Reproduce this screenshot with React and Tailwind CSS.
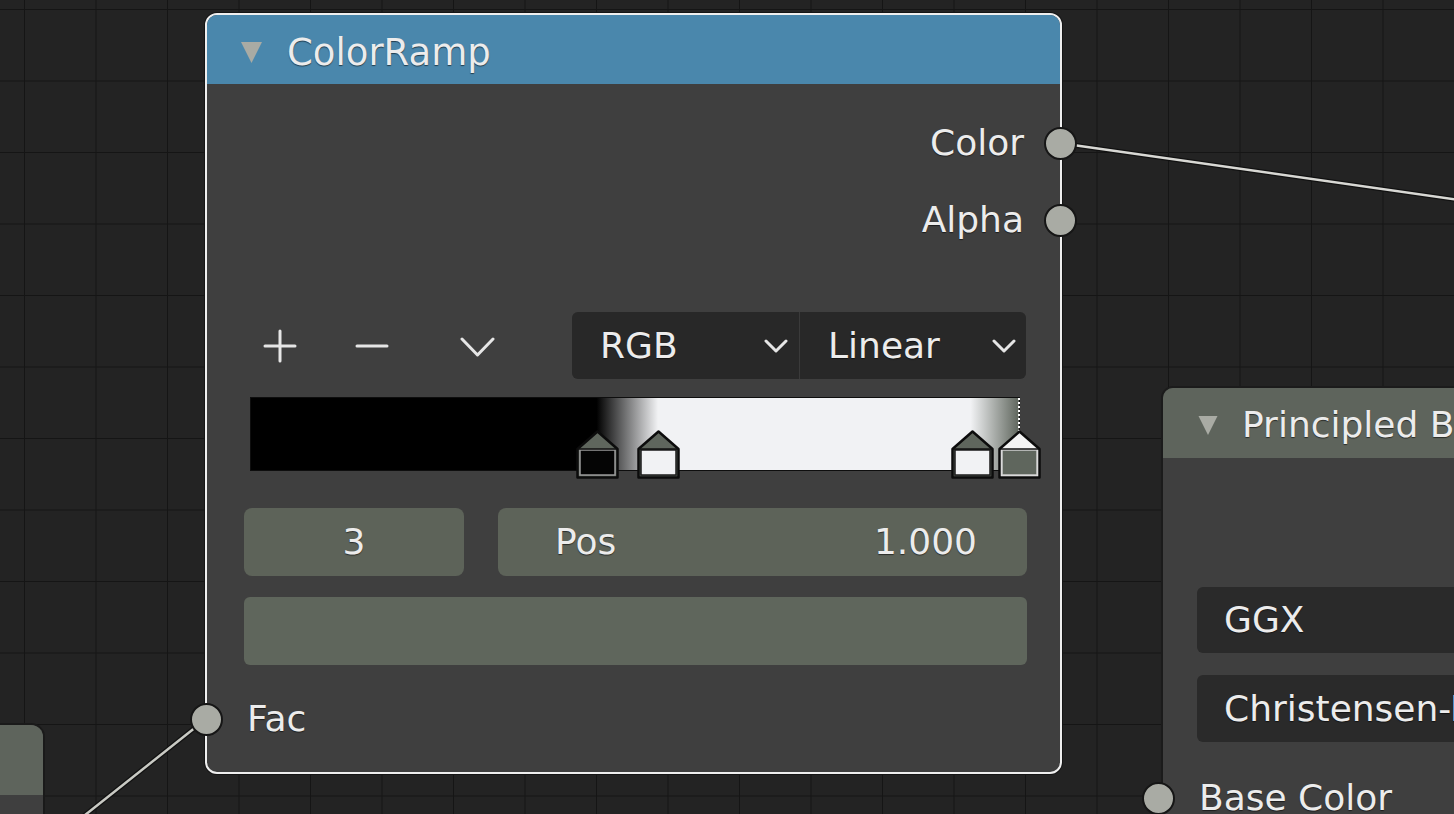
import React from "react";

function Socket({ className }) {
  return (
    <div
      className={
        "absolute w-[33px] h-[33px] rounded-full bg-[#a9aba4] border-2 border-[#161616] " +
        className
      }
    />
  );
}

function Tri({ className }) {
  return (
    <svg width="21" height="21" viewBox="0 0 21 21" className={className}>
      <polygon points="0,0 21,0 10.5,21" fill="#a9aba4" />
    </svg>
  );
}

function Chevron({ w = 24, h = 14, sw = 3 }) {
  return (
    <svg width={w} height={h} viewBox={`0 0 ${w} ${h}`}>
      <path
        d={`M2 2 L${w / 2} ${h - 2} L${w - 2} 2`}
        fill="none"
        stroke="#e6e6e6"
        strokeWidth={sw}
        strokeLinecap="round"
        strokeLinejoin="round"
      />
    </svg>
  );
}

function Marker({ left, roof, body, inner }) {
  return (
    <svg
      width="43"
      height="49"
      viewBox="0 0 43 49"
      className="absolute top-[33px]"
      style={{ left }}
    >
      <path
        d="M1.5 47.5 L1.5 19 L21.5 1.5 L41.5 19 L41.5 47.5 Z"
        fill={roof}
        stroke="#0c0c0c"
        strokeWidth="2.5"
        strokeLinejoin="round"
      />
      <rect
        x="4"
        y="20"
        width="35"
        height="25"
        fill={body}
        stroke={inner}
        strokeWidth="1.5"
      />
      <line x1="2" y1="19" x2="41" y2="19" stroke="#111" strokeWidth="1.5" />
    </svg>
  );
}

const txt = "text-[#ececec] [text-shadow:0_1px_1px_rgba(0,0,0,0.55)]";

export default function App() {
  return (
    <div className="relative w-[1454px] h-[814px] overflow-hidden bg-[#232323] bg-[linear-gradient(to_right,#151515_1px,transparent_1px),linear-gradient(to_bottom,#151515_1px,transparent_1px)] [background-size:71.5px_71.5px] [background-position:24px_9px] font-['DejaVu_Sans',sans-serif] text-[36px] leading-none">
      {/* links */}
      <svg
        className="absolute left-0 top-0 pointer-events-none"
        width="1454"
        height="814"
      >
        <line x1="1059" y1="143" x2="1470" y2="201.5" stroke="#111" strokeWidth="5" />
        <line x1="1059" y1="143" x2="1470" y2="201.5" stroke="#d8d8d4" strokeWidth="2.5" />
        <line x1="206" y1="719" x2="75" y2="823" stroke="#111" strokeWidth="5" />
        <line x1="206" y1="719" x2="75" y2="823" stroke="#c9cac4" strokeWidth="2.5" />
      </svg>

      {/* bottom-left partial node */}
      <div className="absolute left-[-300px] top-[725px] w-[343px] h-[200px] rounded-[12px] bg-[#3f3f3f] overflow-hidden shadow-[0_0_0_2px_#1a1a1a] flex flex-col">
        <div className="h-[70px] bg-[#5e645c]" />
      </div>

      {/* ColorRamp node */}
      <div className="absolute left-[205px] top-[13px] w-[857px] h-[761px] rounded-[12px] border-2 border-[#efefef] bg-[#3f3f3f] shadow-[0_0_0_1px_#151515] flex flex-col">
        <div className="h-[69px] shrink-0 bg-[#4a87ac] rounded-t-[10px] flex items-center pl-[34px] pt-[5px]">
          <Tri />
          <span className={"ml-[25px] text-[37px] " + txt}>ColorRamp</span>
        </div>

        {/* Color output */}
        <div className="relative mt-[34px] h-[50px] flex items-center justify-end pr-[36px]">
          <span className={txt}>Color</span>
          <Socket className="right-[-17px] top-[9px]" />
        </div>
        {/* Alpha output */}
        <div className="relative mt-[27px] h-[50px] flex items-center justify-end pr-[36px]">
          <span className={txt}>Alpha</span>
          <Socket className="right-[-17px] top-[9px]" />
        </div>

        {/* toolbar */}
        <div className="mt-[67px] h-[67px] flex items-center pl-[37px] pr-[34px]">
          <svg width="34" height="34" viewBox="0 0 34 34" className="ml-[19px]">
            <path d="M17 2 V32 M2 17 H32" stroke="#e6e6e6" strokeWidth="3" strokeLinecap="round" />
          </svg>
          <svg width="34" height="34" viewBox="0 0 34 34" className="ml-[58px]">
            <path d="M2 17 H32" stroke="#e6e6e6" strokeWidth="3" strokeLinecap="round" />
          </svg>
          <div className="ml-[71px] mt-[2px]">
            <Chevron w={35} h={20} sw={3} />
          </div>
          <div className="ml-auto w-[454px] h-[67px] flex gap-[1px] rounded-[6px] overflow-hidden bg-[#3a3a3a]">
            <div className="flex-1 bg-[#282828] flex items-center pl-[28px] pr-[11px]">
              <span className={txt}>RGB</span>
              <div className="ml-auto">
                <Chevron />
              </div>
            </div>
            <div className="flex-1 bg-[#282828] flex items-center pl-[28px] pr-[10px]">
              <span className={txt}>Linear</span>
              <div className="ml-auto">
                <Chevron />
              </div>
            </div>
          </div>
        </div>

        {/* ramp */}
        <div className="mt-[18px] h-[82px] pl-[43px]">
          <div className="relative w-[770px] h-[82px]">
            <div className="w-[770px] h-[74px] border border-[#0e0e0e] bg-[linear-gradient(to_right,#000000_45%,#f1f2f4_53%,#f1f2f4_93.7%,#5f665d_100%)]" />
            <div className="absolute left-[768px] top-[1px] h-[34px] w-0 border-l-2 border-dotted border-[#ffffff]" />
            <Marker left={326} roof="#5f665d" body="#050505" inner="#9a9a9a" />
            <Marker left={387} roof="#5f665d" body="#f1f2f4" inner="#1a1a1a" />
            <Marker left={701} roof="#5f665d" body="#f1f2f4" inner="#1a1a1a" />
            <Marker left={748} roof="#f4f4f4" body="#5f665d" inner="#d0d0d0" />
          </div>
        </div>

        {/* fields */}
        <div className="mt-[29px] h-[68px] flex pl-[37px] gap-[34px]">
          <div className="w-[220px] h-[68px] rounded-[8px] bg-[#5d6359] flex items-center justify-center">
            <span className={txt}>3</span>
          </div>
          <div className="w-[529px] h-[68px] rounded-[8px] bg-[#5d6359] flex items-center pl-[57px] pr-[50px]">
            <span className={txt}>Pos</span>
            <span className={"ml-auto " + txt}>1.000</span>
          </div>
        </div>

        {/* swatch */}
        <div className="mt-[21px] ml-[37px] w-[783px] h-[68px] rounded-[6px] bg-[#5f665c]" />

        {/* Fac input */}
        <div className="relative mt-[29px] h-[50px] flex items-center pl-[40px]">
          <span className={txt}>Fac</span>
          <Socket className="left-[-17px] top-[9px]" />
        </div>
      </div>

      {/* Principled BSDF node */}
      <div className="absolute left-[1161px] top-[386px] w-[700px] h-[600px] rounded-[12px] border-2 border-[#1b1b1b] bg-[#3f3f3f] flex flex-col">
        <div className="h-[70px] shrink-0 bg-[#5e645c] rounded-t-[10px] flex items-center pl-[35px] pt-[4px]">
          <Tri className="w-[20px] h-[19px]" />
          <span className={"ml-[24px] whitespace-nowrap " + txt}>Principled BSDF</span>
        </div>
        <div className="mt-[129px] ml-[34px] w-[600px] h-[66px] rounded-[6px] bg-[#2a2a2a] flex items-center pl-[27px]">
          <span className={txt}>GGX</span>
        </div>
        <div className="mt-[22px] ml-[34px] w-[600px] h-[67px] rounded-[6px] bg-[#2a2a2a] flex items-center pl-[27px]">
          <span className={"whitespace-nowrap " + txt}>Christensen-Burley</span>
        </div>
        <div className="relative mt-[31px] h-[50px] flex items-center pl-[36px]">
          <span className={"whitespace-nowrap " + txt}>Base Color</span>
          <Socket className="left-[-21px] top-[9px]" />
        </div>
      </div>
    </div>
  );
}
